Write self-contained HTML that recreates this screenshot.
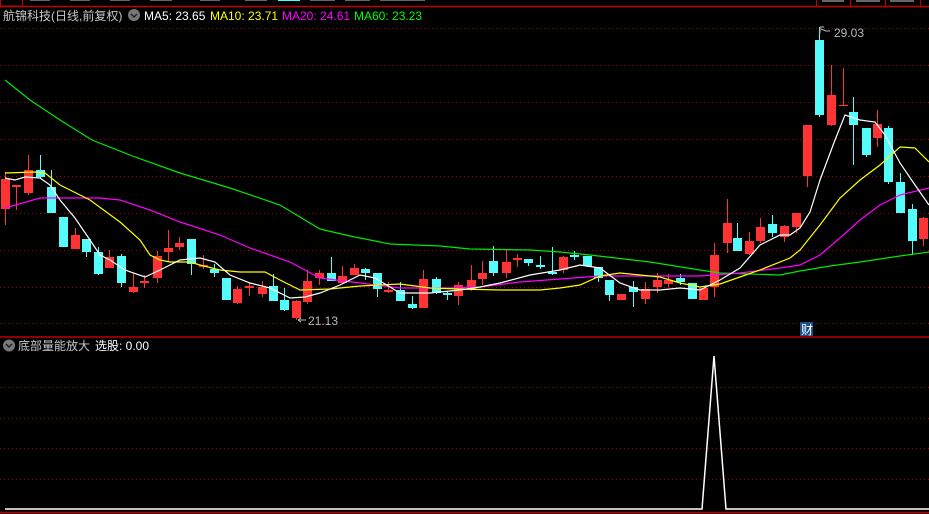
<!DOCTYPE html>
<html><head><meta charset="utf-8"><style>
html,body{margin:0;padding:0;background:#000;width:929px;height:514px;overflow:hidden}
svg{display:block}
text{font-family:"Liberation Sans","Noto Sans CJK SC",sans-serif}
</style></head><body>
<svg id="s" width="929" height="514" viewBox="0 0 929 514" xmlns="http://www.w3.org/2000/svg">
<rect width="929" height="514" fill="#000"/>
<line x1="0" y1="6.5" x2="929" y2="6.5" stroke="#c00000" stroke-width="1.5"/>
<rect x="0.5" y="-1" width="22" height="7" fill="none" stroke="#c00000"/>
<g stroke="#c00000"><line x1="816.5" y1="0" x2="816.5" y2="6"/><line x1="850.5" y1="0" x2="850.5" y2="6"/><line x1="885.5" y1="0" x2="885.5" y2="6"/><line x1="920.5" y1="0" x2="920.5" y2="6"/></g>
<g fill="#666"><rect x="822" y="0" width="22" height="2"/><rect x="856" y="0" width="24" height="2"/><rect x="890" y="0" width="24" height="2"/><rect x="30" y="0" width="20" height="1"/><rect x="70" y="0" width="20" height="1"/><rect x="110" y="0" width="20" height="1"/><rect x="150" y="0" width="22" height="1"/><rect x="200" y="0" width="20" height="1"/><rect x="245" y="0" width="22" height="1"/><rect x="310" y="0" width="25" height="1"/><rect x="345" y="0" width="25" height="1"/><rect x="380" y="0" width="45" height="1"/></g>
<rect x="278" y="0" width="22" height="1" fill="#4ff"/>
<g stroke="#a00000" stroke-width="1" stroke-dasharray="1 3">
<line x1="0" y1="28.5" x2="929" y2="28.5"/><line x1="0" y1="65.5" x2="929" y2="65.5"/><line x1="0" y1="102.5" x2="929" y2="102.5"/><line x1="0" y1="139.5" x2="929" y2="139.5"/><line x1="0" y1="176.5" x2="929" y2="176.5"/><line x1="0" y1="213.5" x2="929" y2="213.5"/><line x1="0" y1="250.5" x2="929" y2="250.5"/><line x1="0" y1="287.5" x2="929" y2="287.5"/><line x1="0" y1="323.5" x2="929" y2="323.5"/>
<line x1="0" y1="387.5" x2="929" y2="387.5"/><line x1="0" y1="418.5" x2="929" y2="418.5"/><line x1="0" y1="448.5" x2="929" y2="448.5"/><line x1="0" y1="479.5" x2="929" y2="479.5"/>
</g>
<line x1="0" y1="337" x2="929" y2="337" stroke="#c00000" stroke-width="1.5"/>
<line x1="0" y1="512.5" x2="929" y2="512.5" stroke="#c00000" stroke-width="1.5"/>
<g id="c"></g>
<polyline fill="none" stroke="#00e800" stroke-width="1.2" points="5,80 30,100 60,120 92,140 135,157 180,173 230,188 280,205 320,229 350,236 390,244 440,246 470,249 530,250 560,252 590,255 650,262 700,270 720,273 780,275 800,271 830,266 860,262 900,256 929,252"/>
<polyline fill="none" stroke="#ff00ff" stroke-width="1.2" points="5,208 40,198 60,198 100,198 120,200 150,210 180,222 220,235 250,248 290,262 320,278 360,283 400,288 450,288 480,287 520,282 560,279 600,276 640,276 700,276 740,273 780,268 800,265 820,255 840,238 860,220 880,205 900,195 929,188"/>
<polyline fill="none" stroke="#ffff00" stroke-width="1.2" points="5,173 35,172 45,173 60,185 90,200 120,222 140,240 150,255 160,260 170,262 190,262 200,265 220,270 240,272 265,272 280,280 300,290 330,289 360,286 400,284 430,288 460,289 500,290 540,290 560,288 580,285 600,276 620,273 640,275 660,277 680,283 700,287 720,284 740,277 760,270 790,258 800,250 820,225 840,198 860,180 880,165 900,147 915,148 929,162"/>
<polyline fill="none" stroke="#ffffff" stroke-width="1.2" points="5,178 15,180 25,177 40,178 50,185 60,200 75,218 90,240 100,255 110,260 125,270 145,277 160,270 180,260 200,258 215,262 230,275 250,283 270,288 290,298 305,297 320,293 340,285 360,275 375,278 400,293 430,293 460,290 480,287 500,283 530,275 560,270 580,265 600,268 620,283 640,290 660,290 680,288 700,290 710,285 720,280 740,268 760,245 780,235 790,235 800,228 810,212 820,180 835,140 845,115 860,120 875,122 885,135 900,163 915,185 929,205"/>
<text x="3" y="20" fill="#c8c8c8" font-size="12">航锦科技(日线,前复权)</text>
<circle cx="134" cy="15" r="6" fill="#777"/><path d="M131 14 L134 17 L137 14" stroke="#222" stroke-width="1.5" fill="none"/>
<text x="144" y="20" fill="#fff" font-size="12">MA5: 23.65</text>
<text x="210" y="20" fill="#ffff00" font-size="12">MA10: 23.71</text>
<text x="282" y="20" fill="#ff00ff" font-size="12">MA20: 24.61</text>
<text x="354" y="20" fill="#00ff00" font-size="12">MA60: 23.23</text>
<path d="M820 27 L820 33 M820 27 L824 27 M821 29 L826 31 L830 31" stroke="#bbb" fill="none"/>
<text x="834" y="37" fill="#bbb" font-size="12">29.03</text>
<path d="M298 320 L306 320 M298 320 L301 318 M298 320 L301 322" stroke="#bbb" fill="none"/>
<text x="308" y="325" fill="#bbb" font-size="12">21.13</text>
<rect x="800" y="322" width="13" height="14" fill="#1a4f8a"/>
<text x="801" y="334" fill="#fff" font-size="12">财</text>
<circle cx="9" cy="345.5" r="6" fill="#777"/><path d="M6 344 L9 347 L12 344" stroke="#222" stroke-width="1.5" fill="none"/>
<text x="18" y="350" fill="#c8c8c8" font-size="12">底部量能放大</text>
<text x="95" y="350" fill="#fff" font-size="12">选股: 0.00</text>
<polyline fill="none" stroke="#fff" stroke-width="1.5" points="5,509 702,509 714,356 726,509 929,509"/>
</svg>
<script>
var R="#ff3333",C="#54fcfc";
var d=[[5,179,209,172,225,R],[16,185,187,185,210,R],[28,170,193,155,195,R],[40,170,177,155,178,C],[51,187,213,170,213,C],[63,217,247,217,247,C],[75,235,249,228,249,R],[86,239,252,239,257,C],[98,252,274,247,275,C],[109,257,268,250,268,R],[121,256,283,254,287,C],[133,287,292,273,293,R],[144,281,283,275,288,R],[157,256,278,251,283,R],[168,248,252,230,261,R],[179,243,247,237,250,R],[191,239,264,239,275,C],[203,265,267,255,269,R],[214,269,273,264,277,C],[226,278,300,278,300,C],[237,289,303,286,304,R],[249,286,288,282,296,R],[262,287,294,281,297,R],[273,286,301,274,301,C],[284,300,310,288,311,C],[296,301,318,300,320,R],[307,281,302,270,304,R],[319,273,278,270,285,R],[331,273,281,257,281,C],[342,276,283,266,283,R],[354,268,275,264,275,R],[365,269,273,268,280,C],[377,273,289,273,297,C],[388,290,292,282,293,R],[400,290,301,282,301,C],[412,304,308,296,309,C],[423,279,308,270,308,R],[436,279,293,277,294,C],[447,293,295,291,300,C],[458,285,296,282,305,R],[471,280,290,265,291,R],[482,273,279,261,285,R],[493,261,273,246,276,C],[506,262,273,250,278,R],[517,258,260,254,267,R],[528,259,263,259,266,C],[540,265,267,256,269,C],[552,272,274,247,275,C],[563,257,270,256,273,R],[574,255,257,251,260,C],[587,256,266,256,267,C],[598,267,278,267,282,C],[609,280,295,280,301,C],[621,294,300,294,300,R],[633,287,292,281,307,C],[645,289,299,282,304,R],[657,280,287,273,293,R],[668,280,284,274,287,R],[680,278,282,274,285,C],[692,283,299,283,299,C],[703,288,300,288,300,R],[714,255,287,243,297,R],[727,223,243,199,253,R],[737,238,251,223,251,C],[749,241,254,232,255,R],[760,227,241,218,243,R],[772,224,233,215,237,C],[784,226,237,225,242,R],[796,213,227,213,233,R],[807,125,176,125,187,R],[819,40,115,27,117,C],[831,95,125,65,126,R],[843,105,106,68,106,R],[853,112,125,97,165,C],[866,128,155,128,157,C],[877,124,138,110,147,R],[888,128,182,126,184,C],[900,182,213,173,213,C],[912,209,241,204,255,C],[923,218,239,217,246,R]];
var g=document.getElementById("c"),h="";
d.forEach(function(a){var x=a[0],t=a[1],b=Math.max(a[2],a[1]+1);
h+='<line x1="'+(x+.5)+'" y1="'+a[3]+'" x2="'+(x+.5)+'" y2="'+a[4]+'" stroke="'+a[5]+'"/>';
h+='<rect x="'+(x-4)+'" y="'+t+'" width="9" height="'+(b-t)+'" fill="'+a[5]+'"/>';});
g.innerHTML=h;
</script>
</body></html>
